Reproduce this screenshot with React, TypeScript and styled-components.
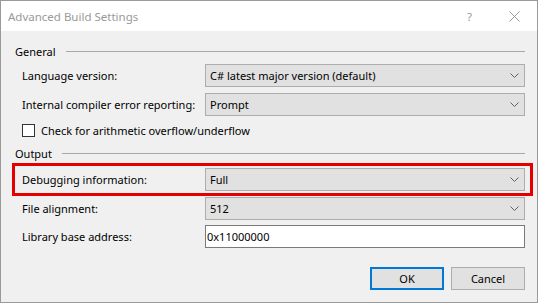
import React from 'react';
import styled, { createGlobalStyle } from 'styled-components';

const GlobalStyle = createGlobalStyle`
  html, body {
    margin: 0;
    padding: 0;
    background: #f0f0f0;
  }
  body {
    font-family: 'Noto Sans', 'Liberation Sans', sans-serif;
    font-size: 11px;
    color: #000;
  }
`;

const Window = styled.div`
  width: 538px;
  height: 303px;
  box-sizing: border-box;
  border: 1px solid #9a9a9a;
  background: #f0f0f0;
  display: flex;
  flex-direction: column;
`;

const TitleBar = styled.div`
  height: 30px;
  background: #fff;
  display: flex;
  align-items: center;
  padding-left: 7px;
  color: #999;
  font-size: 11.5px;
`;

const Title = styled.span`
  flex: 1;
`;

const TitleButton = styled.span`
  width: 45px;
  display: flex;
  justify-content: center;
  align-items: center;
  color: #999;
`;

const Body = styled.div`
  padding: 12px 12px 0 14px;
  display: flex;
  flex-direction: column;
  white-space: nowrap;
`;

const GroupHeader = styled.div<{ $gap: number }>`
  height: 16px;
  display: flex;
  align-items: center;
  gap: 10px;
  margin-top: ${({ $gap }) => $gap}px;
  &::after {
    content: '';
    flex: 1;
    height: 1px;
    background: #a8a8a8;
  }
`;

const Row = styled.div<{ $gap: number; $highlight?: boolean }>`
  display: flex;
  align-items: center;
  margin-top: ${({ $gap }) => $gap}px;
  padding-left: 7px;
  ${({ $highlight }) =>
    $highlight &&
    `
    border: 3px solid #e40000;
    margin-left: -3px;
    margin-right: -8px;
    padding: 2px 5px 2px 7px;
  `}
`;

const Label = styled.div`
  width: 183px;
  flex-shrink: 0;
`;

const Combo = styled.div`
  flex: 1;
  height: 23px;
  box-sizing: border-box;
  border: 1px solid #adadad;
  background: #e1e1e1;
  display: flex;
  align-items: center;
  padding: 0 5px 0 4px;
`;

const ComboText = styled.span`
  flex: 1;
`;

const TextBox = styled.div`
  flex: 1;
  height: 23px;
  box-sizing: border-box;
  border: 1px solid #7a7a7a;
  background: #fff;
  display: flex;
  align-items: center;
  padding-left: 1px;
`;

const CheckRow = styled.label<{ $gap: number }>`
  display: flex;
  align-items: center;
  gap: 6px;
  height: 16px;
  margin-top: ${({ $gap }) => $gap}px;
  padding-left: 7px;
`;

const CheckBox = styled.span`
  width: 13px;
  height: 13px;
  box-sizing: border-box;
  border: 1px solid #333;
  background: #fff;
`;

const Footer = styled.div`
  display: flex;
  justify-content: flex-end;
  gap: 7px;
  margin-top: 19px;
`;

const Button = styled.button<{ $primary?: boolean }>`
  width: 74px;
  height: 23px;
  box-sizing: border-box;
  font: inherit;
  color: #000;
  background: #e1e1e1;
  border: ${({ $primary }) => ($primary ? '2px solid #0078d7' : '1px solid #adadad')};
  padding: 0;
`;

const Chevron = () => (
  <svg width="9" height="5" viewBox="0 0 9 5">
    <polyline points="0.5,0.5 4.5,4.5 8.5,0.5" fill="none" stroke="#606060" strokeWidth="1" />
  </svg>
);

const CloseIcon = () => (
  <svg width="11" height="11" viewBox="0 0 11 11">
    <path d="M0.5 0.5 L10.5 10.5 M10.5 0.5 L0.5 10.5" stroke="#999" strokeWidth="1" />
  </svg>
);

const ComboBox: React.FC<{ value: string }> = ({ value }) => (
  <Combo>
    <ComboText>{value}</ComboText>
    <Chevron />
  </Combo>
);

export default function App() {
  return (
    <>
      <GlobalStyle />
      <Window>
        <TitleBar>
          <Title>Advanced Build Settings</Title>
          <TitleButton>?</TitleButton>
          <TitleButton>
            <CloseIcon />
          </TitleButton>
        </TitleBar>
        <Body>
          <GroupHeader $gap={0}>General</GroupHeader>
          <Row $gap={5}>
            <Label>Language version:</Label>
            <ComboBox value="C# latest major version (default)" />
          </Row>
          <Row $gap={6}>
            <Label>Internal compiler error reporting:</Label>
            <ComboBox value="Prompt" />
          </Row>
          <CheckRow $gap={6}>
            <CheckBox />
            Check for arithmetic overflow/underflow
          </CheckRow>
          <GroupHeader $gap={7}>Output</GroupHeader>
          <Row $gap={2} $highlight>
            <Label>Debugging information:</Label>
            <ComboBox value="Full" />
          </Row>
          <Row $gap={1}>
            <Label>File alignment:</Label>
            <ComboBox value="512" />
          </Row>
          <Row $gap={5}>
            <Label>Library base address:</Label>
            <TextBox>0x11000000</TextBox>
          </Row>
          <Footer>
            <Button $primary>OK</Button>
            <Button>Cancel</Button>
          </Footer>
        </Body>
      </Window>
    </>
  );
}
